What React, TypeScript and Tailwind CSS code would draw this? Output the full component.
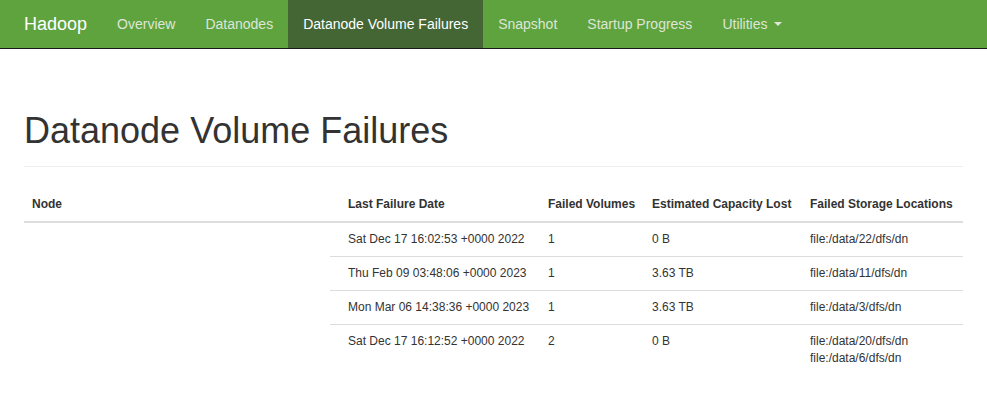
import React from "react";

type Failure = {
  date: string;
  volumes: number;
  lost: string;
  locations: string[];
};

const failures: Failure[] = [
  { date: "Sat Dec 17 16:02:53 +0000 2022", volumes: 1, lost: "0 B", locations: ["file:/data/22/dfs/dn"] },
  { date: "Thu Feb 09 03:48:06 +0000 2023", volumes: 1, lost: "3.63 TB", locations: ["file:/data/11/dfs/dn"] },
  { date: "Mon Mar 06 14:38:36 +0000 2023", volumes: 1, lost: "3.63 TB", locations: ["file:/data/3/dfs/dn"] },
  {
    date: "Sat Dec 17 16:12:52 +0000 2022",
    volumes: 2,
    lost: "0 B",
    locations: ["file:/data/20/dfs/dn", "file:/data/6/dfs/dn"],
  },
];

const links = ["Overview", "Datanodes", "Datanode Volume Failures", "Snapshot", "Startup Progress"];

function Navbar() {
  return (
    <nav className="flex h-[49px] items-stretch border-b border-[#1a1a1a] bg-[#5fa33e] pl-[9px] text-[14px]">
      <span className="flex items-center px-[15px] text-[18px] text-white">Hadoop</span>
      {links.map((l) =>
        l === "Datanode Volume Failures" ? (
          <span key={l} className="flex items-center bg-[#446534] px-[15px] text-white">
            {l}
          </span>
        ) : (
          <span key={l} className="flex items-center px-[15px] text-[#dde6d8]">
            {l}
          </span>
        )
      )}
      <span className="flex items-center px-[15px] text-[#dde6d8]">
        Utilities
        <span className="ml-[6px] inline-block h-0 w-0 border-x-4 border-t-4 border-x-transparent border-t-[#dde6d8]" />
      </span>
    </nav>
  );
}

export default function App() {
  return (
    <div className="min-h-screen bg-white font-['Liberation_Sans',Arial,sans-serif] text-[#333]">
      <Navbar />
      <main className="px-6">
        <h1 className="mt-[62px] border-b border-[#eee] pb-[15px] text-[36px] leading-[40px] font-normal">
          Datanode Volume Failures
        </h1>

        <div className="mt-[21px] grid grid-cols-[306px_210px_104px_158px_1fr] text-[12px] leading-[17px]">
          {/* header */}
          <div className="border-b-2 border-[#ddd] px-2 py-2 font-bold">Node</div>
          <div className="border-b-2 border-[#ddd] py-2 pr-2 pl-[18px] font-bold">Last Failure Date</div>
          <div className="border-b-2 border-[#ddd] px-2 py-2 font-bold">Failed Volumes</div>
          <div className="border-b-2 border-[#ddd] px-2 py-2 font-bold">Estimated Capacity Lost</div>
          <div className="border-b-2 border-[#ddd] px-2 py-2 font-bold">Failed Storage Locations</div>

          {/* node cell spans every failure row */}
          <div className="row-span-4 px-2 py-2" />
          {failures.map((f, i) => {
            const line = i < failures.length - 1 ? "border-b border-[#ddd]" : "";
            return (
              <React.Fragment key={i}>
                <div className={`py-2 pr-2 pl-[18px] ${line}`}>{f.date}</div>
                <div className={`px-2 py-2 ${line}`}>{f.volumes}</div>
                <div className={`px-2 py-2 ${line}`}>{f.lost}</div>
                <div className={`px-2 py-2 ${line}`}>
                  {f.locations.map((loc) => (
                    <div key={loc}>{loc}</div>
                  ))}
                </div>
              </React.Fragment>
            );
          })}
        </div>
      </main>
    </div>
  );
}
